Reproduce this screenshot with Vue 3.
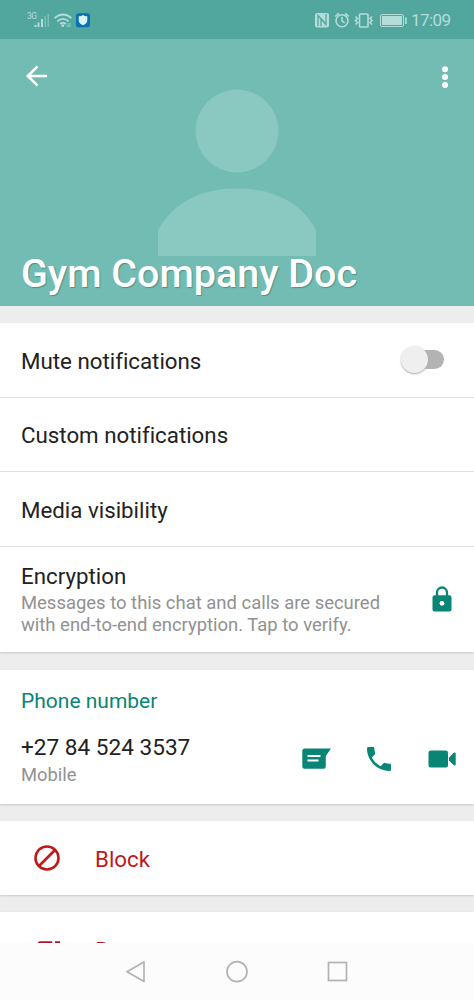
<script setup>
const settings = ['Custom notifications', 'Media visibility']
</script>

<template>
  <div class="screen">
    <header class="hero">
      <div class="status">
        <svg class="status-left" width="70" height="20" viewBox="0 0 70 20">
          <text x="0" y="9" class="net">3G</text>
          <g fill="#b4dcd8">
            <rect x="7.500" y="15" width="2" height="2" />
            <rect x="10.500" y="12.500" width="2" height="4.500" />
            <rect x="14" y="9" width="2" height="8" />
          </g>
          <g fill="#7bbfb8">
            <rect x="17.500" y="6" width="1.500" height="11" />
            <rect x="20.500" y="4" width="1.500" height="13" />
          </g>
          <g fill="none" stroke="#b4dcd8" stroke-width="1.700">
            <path d="M27.500 8.200Q36 0.800 44.500 8.200" />
            <path d="M30.300 11.300Q36 6.500 41.700 11.300" />
            <path d="M33 14Q36 11.700 38.800 14" />
          </g>
          <circle cx="35.800" cy="15.700" r="1.400" fill="#b4dcd8" />
          <path d="M41 13v4M39.500 15.500l1.500 1.500 1.300-1.500M43 17v-4" fill="none" stroke="#8dcac3" />
          <rect x="49" y="3.300" width="14" height="14" rx="2.500" fill="#0b70b4" />
          <path d="M56 5q2 1.500 4.300 1.300v4q0 3.300-4.300 5-4.300-1.700-4.300-5v-4q2.300 .2 4.300-1.300z" fill="#d9f4fc" />
        </svg>
        <div class="status-right">
          <svg width="94" height="20" viewBox="0 0 94 20">
            <rect x="0" y="3" width="14" height="14.500" rx="2" fill="#b4dcd8" />
            <path d="M3 16V5.500L10.500 14M11 4v10.500L6 8.500M6 8v8" fill="none" stroke="#51a79e" stroke-width="1.300" />
            <g fill="none" stroke="#b4dcd8" stroke-width="1.600">
              <circle cx="27" cy="10.700" r="6" />
              <path d="M27 7v3.800l2.700 2M20.200 6.500l3.600-3.200M33.800 6.500L30.200 3.300" />
              <rect x="44.500" y="4" width="8.500" height="13" rx=".8" />
              <path d="M40.500 6l2 2-2 2 2 2-2 2M57 6l-2 2 2 2-2 2 2 2" transform="translate(0 .5)" />
            </g>
            <rect x="65.500" y="4.500" width="23" height="12" rx="1.500" fill="none" stroke="#b4dcd8" />
            <rect x="67" y="6" width="20" height="9" fill="#b4dcd8" />
            <rect x="90" y="7.500" width="1.700" height="6.500" fill="#b4dcd8" />
          </svg>
          <span class="time">17:09</span>
        </div>
      </div>
      <div class="toolbar">
        <svg width="24" height="24" viewBox="0 0 24 24" fill="none" stroke="#fff" stroke-width="2.600">
          <path d="M23 12H4M13.500 2.300L3.800 12l9.700 9.700" />
        </svg>
        <svg width="8" height="24" viewBox="0 0 8 24" fill="#fff">
          <circle cx="4" cy="4.200" r="3" /><circle cx="4" cy="12" r="3" /><circle cx="4" cy="20" r="3" />
        </svg>
      </div>
      <svg class="avatar" width="160" height="168" viewBox="0 0 160 168" fill="#8ac8c2">
        <circle cx="80" cy="42" r="41.500" />
        <path d="M1 167v-26C17 112 46 99.500 80 99.500S143 112 159 141v26z" />
      </svg>
      <h1>Gym Company Doc</h1>
    </header>

    <section class="card first">
      <div class="row">
        <span>Mute notifications</span>
        <div class="switch"><i class="track"></i><i class="thumb"></i></div>
      </div>
      <div v-for="s in settings" :key="s" class="row">{{ s }}</div>
      <div class="row encryption">
        <div>
          <div>Encryption</div>
          <p>Messages to this chat and calls are secured<br>with end-to-end encryption. Tap to verify.</p>
        </div>
        <svg width="20" height="26" viewBox="0 0 20 26">
          <path d="M5 10V6.500a5 5 0 0 1 10 0V10" fill="none" stroke="#088575" stroke-width="2.300" />
          <rect x=".5" y="9.300" width="19" height="16.200" rx="2.200" fill="#088575" />
          <circle cx="10" cy="17.300" r="2.400" fill="#fff" />
        </svg>
      </div>
    </section>

    <section class="card phone">
      <h2>Phone number</h2>
      <div class="contact">
        <div>
          <div class="number">+27 84 524 3537</div>
          <div class="kind">Mobile</div>
        </div>
        <div class="actions">
          <svg width="30" height="26" viewBox="0 0 30 26">
            <path d="M2.800 2.500H29l-5.200 7.500V20.500q0 2.200-2.200 2.200H2.500Q.3 22.700.3 20.500V5Q.3 2.500 2.800 2.500z" fill="#088575" />
            <path d="M5.500 10H18.500M5.500 14.400H16.500" stroke="#fff" stroke-width="2" />
          </svg>
          <svg class="call" width="24" height="24" viewBox="3 3 18 18" fill="#088575">
            <path d="M6.620 10.790c1.440 2.830 3.760 5.140 6.590 6.590l2.200-2.200c.27-.27.67-.36 1.020-.24 1.120.37 2.330.57 3.570.57.55 0 1 .45 1 1V20c0 .55-.45 1-1 1-9.390 0-17-7.610-17-17 0-.55.45-1 1-1h3.500c.55 0 1 .45 1 1 0 1.250.2 2.450.57 3.570.11.35.03.74-.25 1.020l-2.200 2.200z" />
          </svg>
          <svg width="28" height="18" viewBox="0 0 28 18" fill="#088575">
            <rect x=".5" y=".5" width="19.500" height="17" rx="2.300" /><path d="M21 7.500l4.500-4.500q2.200-1 2.200.5v11q0 1.500-2.200.5L21 10.500z" />
          </svg>
        </div>
      </div>
    </section>

    <section class="card danger">
      <svg width="26" height="26" viewBox="0 0 26 26" fill="none" stroke="#bd1a1a" stroke-width="2.600">
        <circle cx="13" cy="13" r="11.500" /><path d="M5 21L21 5" />
      </svg>
      <span>Block</span>
    </section>
    <section class="card danger report">
      <svg width="26" height="26" viewBox="0 0 26 26" fill="#a51c30">
        <path d="M18.500 2.500v14L11 24l-1.500-2 1.300-6H2q-2 0-2-2v-3L3.500 3q.8-1.800 2.500-1.800h11q1.500 0 1.500 1.300zM21 1.200h5v15.300h-5z" />
      </svg>
      <span>Report</span>
    </section>

    <nav>
      <svg width="222" height="24" viewBox="0 0 222 24" fill="none" stroke="#b3b3b3" stroke-width="1.700">
        <path d="M18 2v19.500L1 11.700z" stroke-linejoin="round" />
        <circle cx="111" cy="11.700" r="10" />
        <rect x="202.500" y="2.500" width="18" height="18" />
      </svg>
    </nav>
  </div>
</template>

<style>
body { margin: 0; background: #ededed; }
</style>

<style scoped>
* { box-sizing: border-box; }
.screen {
  width: 474px; height: 1000px; overflow: hidden;
  display: flex; flex-direction: column;
  background: #ededed; color: #222;
  font: 22.300px/26px Roboto, "Noto Sans", sans-serif;
  font-variant-ligatures: none;
}
svg { display: block; flex: none; }
h1, h2, p { margin: 0; font-weight: 400; }
.hero { position: relative; height: 306px; flex: none; background: #72bcb4; display: flex; flex-direction: column; }
.status { height: 39px; background: #51a79e; display: flex; justify-content: space-between; align-items: center; padding: 0 23px 0 27px; }
.net { font: 8.500px Roboto, sans-serif; fill: #b4dcd8; letter-spacing: -.5px; }
.status-right { display: flex; align-items: center; }
.time { font-size: 17px; line-height: 20px; letter-spacing: -.6px; color: #b4dcd8; width: 40px; margin: 1px 0 0 2px; }
.toolbar { display: flex; justify-content: space-between; padding: 26px 25px 0 24px; }
.toolbar svg:first-child { margin-top: -1px; }
.avatar { position: absolute; left: 157px; top: 89px; }
h1 { position: relative; margin: auto 0 8px 21px; font-size: 39.450px; line-height: 48px; font-weight: 500; color: #fff; text-shadow: 1px 1px 1px #4e8f88; white-space: nowrap; }
.card { background: #fff; box-shadow: 0 1px 2px #c8c8c8; flex: none; }
.first { margin-top: 17px; height: 329px; }
.row { height: 74.500px; border-bottom: 1px solid #e0e0e0; padding: 2px 30px 0 21px; display: flex; align-items: center; justify-content: space-between; }
.encryption { height: 105px; border: 0; padding: 0 22px 0 21px; }
p { font-size: 18.450px; line-height: 21.500px; color: #919191; margin: 4px 0 -1px; white-space: nowrap; }
.switch { position: relative; width: 43px; height: 28px; margin-top: -3px; }
.track { position: absolute; left: 8px; top: 5px; width: 35px; height: 19px; border-radius: 10px; background: #b3b3b3; }
.thumb { position: absolute; left: 0; top: 1px; width: 27px; height: 27px; border-radius: 50%; background: #efefef; box-shadow: 0 1px 2px #aaa; }
.phone { height: 134px; margin-top: 18px; padding: 18px 18px 0 21px; }
h2 { font-size: 21px; line-height: 26px; color: #088575; }
.contact { display: flex; justify-content: space-between; margin-top: 20px; }
.number { font-size: 22.600px; padding-top: 1px; }
.kind { font-size: 18.400px; line-height: 22px; color: #919191; margin-top: 3px; }
.actions { display: flex; align-items: center; gap: 36px; height: 50px; }
.call { margin-left: -1px; margin-right: 1px; }
.danger { height: 74px; margin-top: 17px; padding: 1px 34px; display: flex; align-items: center; gap: 35px; color: #bd1a1a; }
.danger span { padding-top: 2px; }
.report { color: #a51c30; }
nav { position: relative; margin-top: -43px; height: 57px; flex: none; background: #fcfcfc; display: flex; align-items: center; padding-left: 126px; }
.report svg { margin-top: 8px; }
</style>
